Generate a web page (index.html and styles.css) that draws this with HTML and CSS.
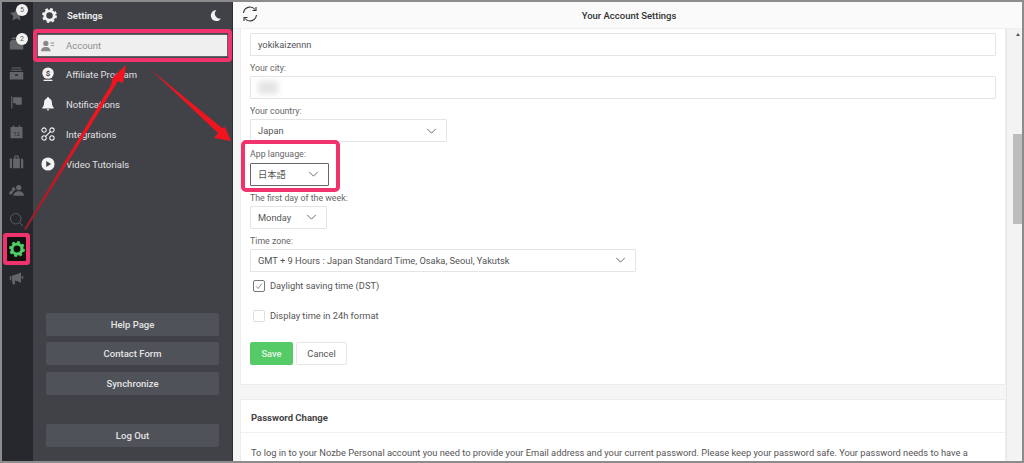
FILE: index.html
```html
<!DOCTYPE html>
<html lang="en">
<head>
<meta charset="utf-8">
<title>Your Account Settings</title>
<link rel="stylesheet" href="styles.css">
</head>
<body>
<svg class="sprite" width="0" height="0">
  <symbol id="gear" viewBox="0 0 24 24">
    <circle cx="12" cy="12" r="7.5" fill="none" stroke="currentColor" stroke-width="4.6"/>
    <circle cx="12" cy="12" r="10.4" fill="none" stroke="currentColor" stroke-width="3" stroke-dasharray="4.2 3.97"/>
  </symbol>
  <symbol id="chev" viewBox="0 0 12 7">
    <path d="M1 1l5 5 5-5" fill="none" stroke="currentColor" stroke-width="1"/>
  </symbol>
  <linearGradient id="tail" gradientUnits="userSpaceOnUse" x1="25" y1="228" x2="85" y2="130">
    <stop offset="0" stop-color="#8e1f2c"/>
    <stop offset="1" stop-color="#f0141e"/>
  </linearGradient>
</svg>
<div class="app">
  <nav class="rail">
    <div class="rail-icon"><svg viewBox="0 0 20 20"><path d="M10 1.500l2.600 5.500 6 .8-4.400 4.100 1.100 6L10 15l-5.300 2.900 1.100-6L1.400 7.800l6-.8z"/></svg><span class="badge">5</span></div>
    <div class="rail-icon"><svg viewBox="0 0 20 20"><path d="M1 8l3-3h12l3 3v10H1zM5 2h10l2 2H3z"/></svg><span class="badge">2</span></div>
    <div class="rail-icon"><svg viewBox="0 0 20 20"><path d="M4 2h12v1.300H4zM2.500 5h15v1.300h-15zM1 8h18v10H1zm7 3v2h4v-2z"/></svg></div>
    <div class="rail-icon"><svg viewBox="0 0 20 20"><path d="M3 2h1.500v16H3zM5.500 3H17v10H9v-2H5.500z"/></svg></div>
    <div class="rail-icon"><svg viewBox="0 0 20 20"><path d="M2 4h3V2h2v2h6V2h2v2h3v15H2z"/><text x="10" y="16" text-anchor="middle" class="cal-num">12</text></svg></div>
    <div class="rail-icon"><svg viewBox="0 0 20 20"><path d="M1 6h3v13H3a2 2 0 0 1-2-2zM5.500 6H7V3a1 1 0 0 1 1-1h4a1 1 0 0 1 1 1v3h1.500v13h-9zM8.500 3.500V6h3V3.500zM16 6h1a2 2 0 0 1 2 2v11h-3z"/></svg></div>
    <div class="rail-icon"><svg viewBox="0 0 20 20"><circle cx="13" cy="6" r="3.500"/><circle cx="6" cy="8" r="2.500"/><path d="M6 17c0-4 3-6 7-6s7 2 7 6zM0 15c0-3 2-5 5-5l1.500.5C5 12 4.300 13.500 4.200 15z"/></svg></div>
    <div class="rail-icon"><svg viewBox="0 0 20 20"><circle cx="9" cy="9" r="7" fill="none" stroke="currentColor" stroke-width="1.100"/><path d="M14 14l4.500 4.500" stroke="currentColor" stroke-width="1.300"/></svg></div>
    <div class="rail-icon rail-active"><span class="gear-box"><svg class="gear-green"><use href="#gear"/></svg></span></div>
    <div class="rail-icon"><svg viewBox="0 0 20 20"><path d="M1 7l2-.5v6L1 12zM4 6.300L14 3l2-1.500V16l-2-1.500-6-2v5l-3 .5-1-6z"/><path d="M17 6.500h2v4h-2z"/></svg></div>
  </nav>

  <aside class="panel">
    <header class="panel-head">
      <svg class="head-gear"><use href="#gear"/></svg>
      <span class="panel-title">Settings</span>
      <svg class="moon" viewBox="0 0 14 14"><path d="M8 1a6 6 0 1 0 5 9.300A5.500 5.500 0 0 1 8 1z"/></svg>
    </header>
    <ul class="menu">
      <li class="menu-item menu-current"><svg class="menu-icon" viewBox="0 0 16 14"><circle cx="5.500" cy="4" r="3"/><path d="M0 13c0-3.500 2.500-5 5.500-5s5.500 1.500 5.500 5zM11 3h4v1h-4zM11 6h4v1h-4z"/></svg><span>Account</span></li>
      <li class="menu-item"><svg class="menu-icon" viewBox="0 0 16 16"><circle cx="8" cy="7" r="6.500"/><path d="M3 14.500h10V16H3z"/><text x="8" y="10" text-anchor="middle" class="dollar">$</text></svg><span>Affiliate Program</span></li>
      <li class="menu-item"><svg class="menu-icon" viewBox="0 0 16 16"><path d="M8 0a1.200 1.200 0 0 1 1.200 1.300C11.500 2 12.500 4 12.500 6.500c0 3 1 4.500 2 5.500v1h-13v-1c1-1 2-2.500 2-5.500C3.500 4 4.500 2 6.800 1.300A1.200 1.200 0 0 1 8 0zM6.500 14h3a1.500 1.500 0 0 1-3 0z"/></svg><span>Notifications</span></li>
      <li class="menu-item"><svg class="menu-icon icon-line" viewBox="0 0 16 16"><circle cx="3.500" cy="3.500" r="2.500"/><circle cx="12.500" cy="3.500" r="2.500"/><circle cx="3.500" cy="12.500" r="2.500"/><circle cx="12.500" cy="12.500" r="2.500"/><path d="M5 11L11 5"/></svg><span>Integrations</span></li>
      <li class="menu-item"><svg class="menu-icon" viewBox="0 0 16 16"><path fill-rule="evenodd" d="M8 .5a7.500 7.500 0 1 1 0 15 7.500 7.500 0 0 1 0-15zM6 4.500v7l5.500-3.500z"/></svg><span>Video Tutorials</span></li>
    </ul>
    <div class="panel-actions">
      <button class="panel-btn">Help Page</button>
      <button class="panel-btn">Contact Form</button>
      <button class="panel-btn">Synchronize</button>
      <button class="panel-btn logout">Log Out</button>
    </div>
  </aside>

  <main class="main">
    <header class="topbar">
      <svg class="refresh" viewBox="0 0 16 16"><path d="M1.500 7A6.500 6.500 0 0 1 13 3.500M14.500 9A6.500 6.500 0 0 1 3 12.500" fill="none" stroke="#333" stroke-width="1.100"/><path d="M14 1v3.500h-3.500M2 15v-3.500h3.500" fill="none" stroke="#333" stroke-width="1.100"/></svg>
      <h1 class="page-title">Your Account Settings</h1>
    </header>
    <div class="content-row">
      <div class="content">
        <section class="card card-form">
          <div class="input">yokikaizennn</div>
          <label class="label">Your city:</label>
          <div class="input"><span class="blurred"></span></div>
          <label class="label">Your country:</label>
          <div class="input select w-country">Japan<svg class="chev"><use href="#chev"/></svg></div>
          <label class="label">App language:</label>
          <div class="input select w-lang lang-active">日本語<svg class="chev"><use href="#chev"/></svg></div>
          <label class="label">The first day of the week:</label>
          <div class="input select w-day">Monday<svg class="chev"><use href="#chev"/></svg></div>
          <label class="label">Time zone:</label>
          <div class="input select w-zone">GMT + 9 Hours : Japan Standard Time, Osaka, Seoul, Yakutsk<svg class="chev"><use href="#chev"/></svg></div>
          <div class="check-row first-check"><span class="box"><svg viewBox="0 0 12 12"><path d="M2.500 6.500l2.500 2.500 4.500-6" fill="none" stroke="#666" stroke-width=".9"/></svg></span>Daylight saving time (DST)</div>
          <div class="check-row"><span class="box box-off"></span>Display time in 24h format</div>
          <div class="form-actions">
            <button class="btn-save">Save</button>
            <button class="btn-cancel">Cancel</button>
          </div>
        </section>
        <section class="card card-pass">
          <h2 class="card-title">Password Change</h2>
          <p class="card-text">To log in to your Nozbe Personal account you need to provide your Email address and your current password. Please keep your password safe. Your password needs to have a minimum of 8 characters. We recommend using a strong and unique password for your account.</p>
        </section>
      </div>
      <div class="scrollbar"><span class="scroll-up"></span><span class="thumb"></span></div>
    </div>
  </main>

  <div class="mark mark-account"></div>
  <div class="mark mark-lang"></div>
  <svg class="arrows" viewBox="0 0 1024 463">
    <path fill="url(#tail)" d="M24 229L111 85 113 77 126 65 123 83 118 81 26 230z"/>
    <path d="M150 69L222 128 225 127 231 141 214 138 218 133z"/>
  </svg>
</div>
</body>
</html>
```
FILE: styles.css
```css
* { box-sizing: border-box; }
html, body { margin: 0; height: 100%; overflow: hidden; }
body { font-family: Roboto, "Noto Sans CJK JP", sans-serif; font-size: 9.3px; color: #555; background: #fff; }
.sprite { position: absolute; }
.app { position: relative; display: flex; width: 1024px; height: 463px; border: 2px solid #8c8c8c; overflow: hidden; }

.rail { width: 31px; flex: none; background: #26282d; display: flex; flex-direction: column; padding-right: 2px; }
.rail-icon { position: relative; flex: none; height: 29.3px; display: flex; align-items: center; justify-content: center; color: #636569; }
.rail-icon:first-child { margin-top: -2px; }
.rail-icon svg { width: 15px; height: 15px; fill: #636569; }
.gear-box { width: 19px; height: 24px; display: flex; align-items: center; justify-content: center; background: #111; border-radius: 1px; box-shadow: 0 0 0 4px #f0336d; }
.rail-icon .gear-green { width: 16px; height: 16px; color: #4fcf63; }
.cal-num { font-size: 8px; fill: #26282d; font-family: Roboto, sans-serif; }
.badge { position: absolute; top: 4px; left: 14px; width: 12px; height: 12px; border-radius: 50%; background: #f2f2f2; color: #555; font-size: 7px; line-height: 12px; text-align: center; }

.panel { width: 200px; flex: none; background: #404248; display: flex; flex-direction: column; border-right: 1px solid #2d2f33; }
.panel-head { height: 27px; display: flex; align-items: center; padding: 0 5px 0 9px; color: #f2f2f2; }
.head-gear { width: 15px; height: 15px; margin-right: 10px; }
.panel-title { flex: 1; font-size: 9.5px; font-weight: 700; color: #e8e8e8; }
.moon { width: 13px; height: 13px; fill: #f2f2f2; margin-right: 5px; }
.menu { list-style: none; margin: 6px 0 0; padding: 0; }
.menu-item { display: flex; align-items: center; height: 30px; padding-left: 8px; color: #e0e0e0; font-size: 9.5px; }
.menu-icon { width: 14px; height: 14px; margin-right: 11px; fill: #f2f2f2; flex: none; }
.icon-line { fill: none; stroke: #f2f2f2; stroke-width: 1.200; }
.dollar { font-size: 9px; font-weight: 700; fill: #404248; font-family: Roboto, sans-serif; }
.menu-current { height: 21px; margin: 0 5px 3px; padding-left: 3px; background: #efefef; color: #909090; box-shadow: 0 0 2px #aaa; }
.menu-current .menu-icon { fill: #8a8a8a; }
.panel-actions { margin: auto 13px 0; padding-bottom: 14px; display: flex; flex-direction: column; gap: 6.5px; }
.panel-btn { height: 23px; border: 0; border-radius: 2px; background: #505259; color: #e4e4e4; font: 500 9.5px Roboto, sans-serif; }
.logout { margin-top: 23px; }

.main { flex: 1; min-width: 0; display: flex; flex-direction: column; background: #f5f5f5; }
.topbar { position: relative; height: 27px; flex: none; padding-left: 3px; background: #fafafa; border-bottom: 1px solid #efefef; display: flex; align-items: center; justify-content: center; }
.refresh { position: absolute; left: 9px; top: 4px; width: 16px; height: 16px; }
.page-title { margin: 0; font-size: 9.5px; font-weight: 500; color: #333; }
.content-row { flex: 1; min-height: 0; display: flex; }
.content { flex: 1; min-width: 0; padding: 0 0 0 7px; overflow: hidden; }
.card { background: #fff; border: 1px solid #ececec; border-top: 0; padding: 0 9px; }
.card-form { height: 356px; padding-top: 4px; }
.input { height: 23px; border: 1px solid #e4e4e4; border-radius: 1px; padding: 0 7px; display: flex; align-items: center; color: #555; font-size: 9.3px; background: #fff; }
.label { display: block; height: 20.2px; padding-top: 6px; line-height: 12px; font-size: 8.8px; color: #666; }
.blurred { width: 20px; height: 13px; background: #e4e4e4; filter: blur(3px); }
.select { justify-content: space-between; padding-right: 9px; }
.chev { width: 11px; height: 6px; color: #555; }
.w-country { width: 197px; }
.w-lang { width: 79px; border-color: #666; }
.w-day { width: 77px; }
.w-zone { width: 386px; }
.check-row { display: flex; align-items: center; height: 30px; padding-left: 3px; font-size: 9.3px; color: #555; }
.first-check { margin-top: -1px; }
.box { width: 12px; height: 12px; border: 1px solid #777; border-radius: 2px; margin-right: 5px; display: block; }
.box svg { display: block; width: 10px; height: 10px; }
.box-off { border-color: #ddd; }
.form-actions { display: flex; gap: 3px; margin-top: 11px; }
.btn-save { width: 43px; height: 23px; border: 0; border-radius: 2px; background: #54cb66; color: #e8f8ea; font: 500 9.3px Roboto, sans-serif; }
.btn-cancel { width: 51px; height: 23px; border: 1px solid #e6e6e6; border-radius: 2px; background: #fff; color: #555; font: 9.3px Roboto, sans-serif; }
.card-pass { margin-top: 14px; border-top: 1px solid #ececec; height: 120px; padding: 0; }
.card-title { margin: 0; padding: 11px 10px 8px; height: 33px; font-size: 9.5px; font-weight: 700; line-height: 13px; color: #444; border-bottom: 1px solid #f0f0f0; }
.card-text { margin: 0; padding: 13px 10px; font-size: 9.3px; line-height: 13px; color: #555; }
.scrollbar { width: 16px; flex: none; background: #f3f3f3; border-left: 1px solid #e8e8e8; display: flex; flex-direction: column; align-items: flex-end; }
.scroll-up { width: 0; height: 0; margin: 4px 2px 0 0; border: 2px solid transparent; border-top: 0; border-bottom: 3px solid #555; }
.thumb { width: 9px; height: 90px; margin-top: 98px; background: #bdbdbd; }

.mark { position: absolute; border: 4px solid #f0336d; border-radius: 4px; pointer-events: none; }
.mark-account { left: 31px; top: 27px; width: 199px; height: 33px; }
.mark-lang { left: 239px; top: 138px; width: 99px; height: 52px; border-radius: 5px; }
.arrows { position: absolute; left: -2px; top: -2px; width: 1024px; height: 463px; fill: #f0141e; pointer-events: none; }
```
